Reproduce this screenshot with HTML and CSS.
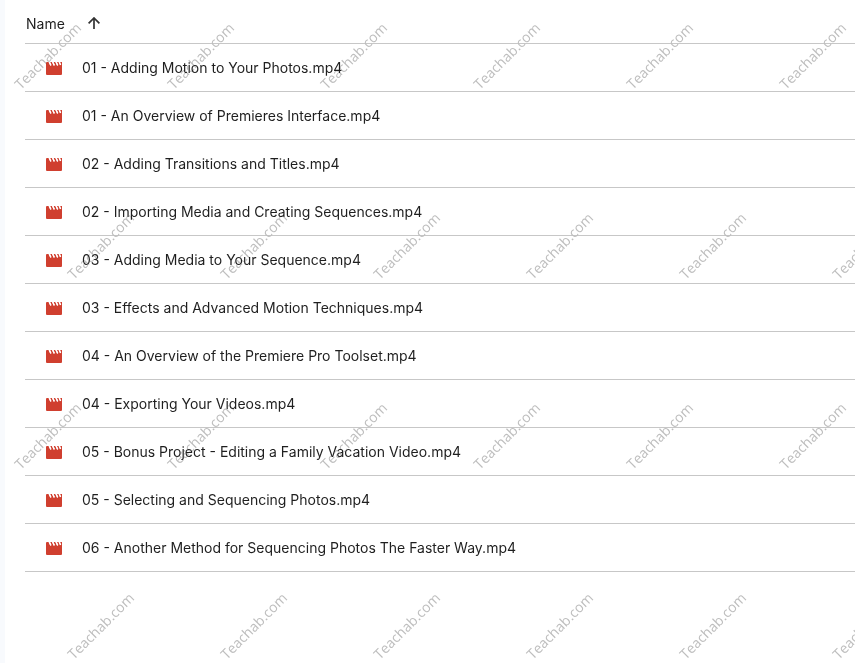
FILE: index.html
```
<!DOCTYPE html>
<html lang="en">
  <head>
    <meta charset="utf-8">
    <meta name="viewport" content="width=device-width, initial-scale=1">
    <title>Files</title>
    <link rel="stylesheet" href="styles.css">
  </head>
  <body>
    <svg class="defs" aria-hidden="true">
      <symbol id="movie" viewBox="0 0 16 13">
        <path d="M0 1Q0 0 1 0H2.6L4.2 3.4H5.4L4 0H6L7.6 3.4H8.8L7.4 0H9.4L11 3.4H12.2L10.8 0H12.6L14 3H15L13.9 0H16V12Q16 13 15 13H1Q0 13 0 12Z"/>
        <path class="slits" d="M3.2 -.4L4.9 3.4M6.6 -.4L8.3 3.4M10 -.4L11.7 3.4M13.2 -.4L14.6 3"/>
      </symbol>
    </svg>

    <main class="file-list">
      <table class="files">
        <thead>
          <tr>
            <th colspan="2">
              <button type="button" class="sort-button">
                Name
                <svg class="arrow" viewBox="0 0 12 12" aria-hidden="true"><path d="M6 12V1M.6 6.4L6 1L11.4 6.4"/></svg>
              </button>
            </th>
          </tr>
        </thead>
        <tbody>
          <tr><td class="icon"><svg><use href="#movie"/></svg></td><td>01 - Adding Motion to Your Photos.mp4</td></tr>
          <tr><td class="icon"><svg><use href="#movie"/></svg></td><td>01 - An Overview of Premieres Interface.mp4</td></tr>
          <tr><td class="icon"><svg><use href="#movie"/></svg></td><td>02 - Adding Transitions and Titles.mp4</td></tr>
          <tr><td class="icon"><svg><use href="#movie"/></svg></td><td>02 - Importing Media and Creating Sequences.mp4</td></tr>
          <tr><td class="icon"><svg><use href="#movie"/></svg></td><td>03 - Adding Media to Your Sequence.mp4</td></tr>
          <tr><td class="icon"><svg><use href="#movie"/></svg></td><td>03 - Effects and Advanced Motion Techniques.mp4</td></tr>
          <tr><td class="icon"><svg><use href="#movie"/></svg></td><td>04 - An Overview of the Premiere Pro Toolset.mp4</td></tr>
          <tr><td class="icon"><svg><use href="#movie"/></svg></td><td>04 - Exporting Your Videos.mp4</td></tr>
          <tr><td class="icon"><svg><use href="#movie"/></svg></td><td>05 - Bonus Project - Editing a Family Vacation Video.mp4</td></tr>
          <tr><td class="icon"><svg><use href="#movie"/></svg></td><td>05 - Selecting and Sequencing Photos.mp4</td></tr>
          <tr><td class="icon"><svg><use href="#movie"/></svg></td><td>06 - Another Method for Sequencing Photos The Faster Way.mp4</td></tr>
        </tbody>
      </table>
    </main>

    <div class="watermark" aria-hidden="true">
      <div class="mark-row"><span>Teachab.com</span><span>Teachab.com</span><span>Teachab.com</span><span>Teachab.com</span><span>Teachab.com</span><span>Teachab.com</span></div>
      <div class="mark-row"><span>Teachab.com</span><span>Teachab.com</span><span>Teachab.com</span><span>Teachab.com</span><span>Teachab.com</span><span>Teachab.com</span></div>
      <div class="mark-row"><span>Teachab.com</span><span>Teachab.com</span><span>Teachab.com</span><span>Teachab.com</span><span>Teachab.com</span><span>Teachab.com</span></div>
      <div class="mark-row"><span>Teachab.com</span><span>Teachab.com</span><span>Teachab.com</span><span>Teachab.com</span><span>Teachab.com</span><span>Teachab.com</span></div>
    </div>
  </body>
</html>
```
FILE: styles.css
```
body {
  margin: 0;
  background: #ffffff;
  color: #1f1f1f;
  font-family: Inter, sans-serif;
  font-size: 14px;
  line-height: 20px;
}

.defs {
  display: none;
}

.file-list {
  box-sizing: border-box;
  min-height: 100vh;
  border-left: 5px solid #f8fafd;
  padding-left: 20px;
}

.files {
  width: 100%;
  border-spacing: 0;
}

.files th,
.files td {
  box-sizing: border-box;
  height: 48px;
  padding: 1px 0 0;
  border-bottom: 1px solid #c7c7c7;
  text-align: left;
  font-weight: 400;
  white-space: nowrap;
}

.files th {
  height: 44px;
  padding-top: 4px;
}

.files .icon {
  width: 57px;
}

.icon svg {
  display: block;
  width: 16px;
  height: 13px;
  margin-left: 21px;
  fill: #d03f2f;
}

.slits {
  stroke: #ffffff;
  stroke-width: 1.4;
}

.sort-button {
  display: flex;
  align-items: center;
  gap: 23px;
  padding: 0 1px;
  border: none;
  background: none;
  color: inherit;
  font: inherit;
  cursor: pointer;
}

.arrow {
  width: 12px;
  height: 12px;
  margin-bottom: 2px;
  fill: none;
  stroke: #333333;
  stroke-width: 1.7;
}

/* diagonal marks repeated over the whole page */
.watermark {
  position: absolute;
  inset: 0;
  overflow: hidden;
  pointer-events: none;
  mix-blend-mode: darken;
  color: #bebebe;
  font-family: "Open Sans", sans-serif;
  font-size: 14px;
  line-height: 20px;
}

.mark-row {
  display: flex;
  gap: 63px;
  height: 144px;
  padding: 46px 0 0 3px;
}

.mark-row:nth-child(even) {
  padding-left: 56px;
}

.mark-row span {
  flex: none;
  width: 90px;
  height: 20px;
  text-align: center;
  transform: rotate(-45deg);
}
```
